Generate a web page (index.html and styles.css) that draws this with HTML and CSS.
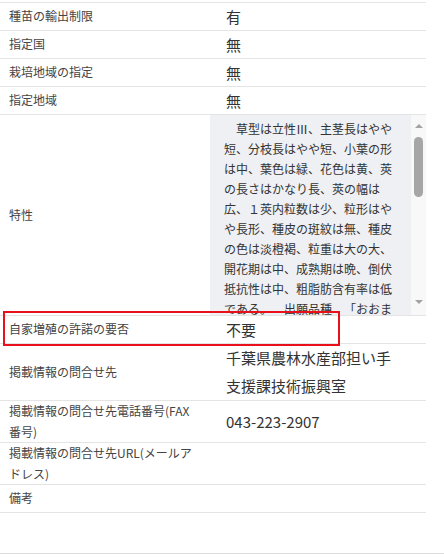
FILE: index.html
```html
<!DOCTYPE html>
<html lang="ja">
<head>
<meta charset="utf-8">
<title>品種詳細</title>
<link rel="stylesheet" href="styles.css">
</head>
<body>
<div class="sheet">
  <div class="row"><div class="label">種苗の輸出制限</div><div class="value">有</div></div>
  <div class="row"><div class="label">指定国</div><div class="value">無</div></div>
  <div class="row"><div class="label">栽培地域の指定</div><div class="value">無</div></div>
  <div class="row"><div class="label">指定地域</div><div class="value">無</div></div>
  <div class="row">
    <div class="label">特性</div>
    <div class="textbox">
      <div class="textbox-text">　草型は立性Ⅲ、主茎長はやや短、分枝長はやや短、小葉の形は中、葉色は緑、花色は黄、莢の長さはかなり長、莢の幅は広、１莢内粒数は少、粒形はやや長形、種皮の斑紋は無、種皮の色は淡橙褐、粒重は大の大、開花期は中、成熟期は晩、倒伏抵抗性は中、粗脂肪含有率は低である。　出願品種　「おおまさり」は、対照品種「ナカテユタカ」と比較して、粒重が大きいこと等で区別性が認められる。</div>
      <div class="scrollbar">
        <div class="sb-btn"><span class="tri tri-up"></span></div>
        <div class="sb-track"><span class="sb-thumb"></span></div>
        <div class="sb-btn"><span class="tri tri-down"></span></div>
      </div>
    </div>
  </div>
  <div class="row">
    <div class="label">自家増殖の許諾の要否</div><div class="value">不要</div>
    <div class="highlight"></div>
  </div>
  <div class="row"><div class="label">掲載情報の問合せ先</div><div class="value value-multi">千葉県農林水産部担い手支援課技術振興室</div></div>
  <div class="row"><div class="label">掲載情報の問合せ先電話番号(FAX番号)</div><div class="value">043-223-2907</div></div>
  <div class="row"><div class="label">掲載情報の問合せ先URL(メールアドレス)</div><div class="value"></div></div>
  <div class="row"><div class="label">備考</div><div class="value"></div></div>
</div>
<div class="footer-line"></div>
</body>
</html>
```

FILE: styles.css
```css
html, body {
  margin: 0;
  padding: 0;
  background: #ffffff;
}

body {
  font-family: "Noto Sans CJK JP", "Noto Sans", sans-serif;
  color: #333333;
}

.sheet {
  width: 426px;
  margin-top: 2px;
  border-top: 1px solid #e4e4e4;
}

.row {
  position: relative;
  display: grid;
  grid-template-columns: 210px 216px;
  align-items: center;
  min-height: 27px;
  border-bottom: 1px solid #e4e4e4;
}

.label {
  font-size: 12px;
  line-height: 20.5px;
  padding: 0 15px 0 9px;
  color: #444444;
}

.value {
  font-size: 15px;
  line-height: 27px;
  padding: 0 32px 0 16px;
  color: #333333;
}

.value-multi {
  line-height: 28px;
}

.textbox {
  display: flex;
  height: 200px;
  background: #eef0f3;
}

.textbox-text {
  flex: 1;
  overflow: hidden;
  padding: 4px 13px 0 14px;
  font-size: 12px;
  line-height: 20px;
  color: #333333;
  line-break: strict;
  text-spacing-trim: space-all;
}

.scrollbar {
  width: 15px;
  display: flex;
  flex-direction: column;
  background: #f8f8f8;
  padding: 3px 0 5px;
}

.sb-btn {
  height: 16px;
  display: flex;
  align-items: center;
  justify-content: center;
}

.tri {
  width: 0;
  height: 0;
  border-left: 4px solid transparent;
  border-right: 4px solid transparent;
}

.tri-up {
  border-bottom: 4px solid #a3a3a3;
}

.tri-down {
  border-top: 4px solid #a3a3a3;
}

.sb-track {
  flex: 1;
  display: flex;
  justify-content: center;
  padding-top: 3px;
}

.sb-thumb {
  width: 9px;
  height: 60px;
  border-radius: 5px;
  background: #a6a6a6;
}

.highlight {
  position: absolute;
  left: 3px;
  top: -5px;
  width: 337px;
  height: 35px;
  box-sizing: border-box;
  border: 2px solid #e8101a;
  pointer-events: none;
}

.footer-line {
  margin-top: 40px;
  border-top: 1px solid #dcdcdc;
}
```
